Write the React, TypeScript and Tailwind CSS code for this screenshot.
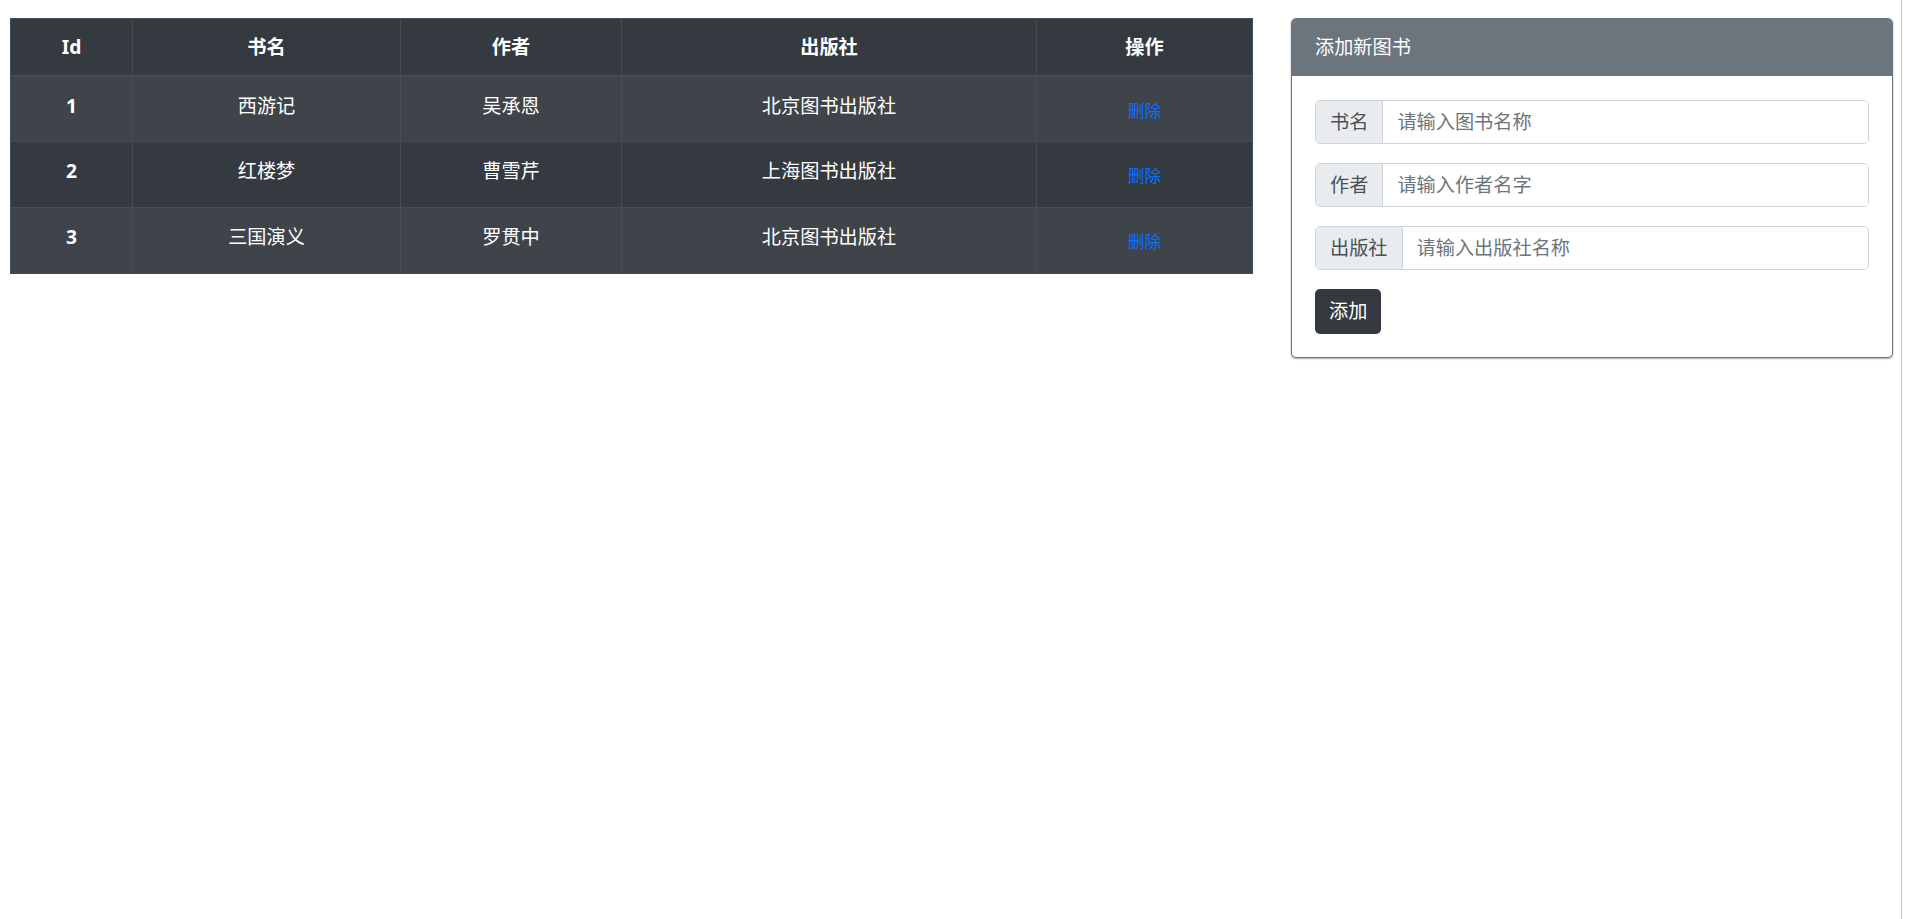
import React, { useState } from 'react';

interface Book {
    id: number;
    name: string;
    author: string;
    publisher: string;
}

const initialBooks: Book[] = [
    { id: 1, name: '西游记', author: '吴承恩', publisher: '北京图书出版社' },
    { id: 2, name: '红楼梦', author: '曹雪芹', publisher: '上海图书出版社' },
    { id: 3, name: '三国演义', author: '罗贯中', publisher: '北京图书出版社' },
];

const font = "font-['Noto_Sans','Noto_Sans_CJK_SC',sans-serif]";

const App: React.FC = () => {
    const [books, setBooks] = useState<Book[]>(initialBooks);
    const [name, setName] = useState('');
    const [author, setAuthor] = useState('');
    const [publisher, setPublisher] = useState('');

    const handleDelete = (id: number) => {
        setBooks(books.filter(b => b.id !== id));
    };

    const handleAdd = () => {
        if (!name || !author || !publisher) return;
        const nextId = books.length ? Math.max(...books.map(b => b.id)) + 1 : 1;
        setBooks([...books, { id: nextId, name, author, publisher }]);
        setName('');
        setAuthor('');
        setPublisher('');
    };

    // input rows of the form
    const fields = [
        { label: '书名', placeholder: '请输入图书名称', value: name, set: setName },
        { label: '作者', placeholder: '请输入作者名字', value: author, set: setAuthor },
        { label: '出版社', placeholder: '请输入出版社名称', value: publisher, set: setPublisher },
    ];

    return (
        <div className={`min-h-screen w-[1902px] border-r border-[#c4c4c4] bg-white ${font}`}>
            <div className="flex items-start gap-[38px] pl-[10px] pt-[18px]">
                {/* books table */}
                <table className="w-[1242px] table-fixed border-collapse border border-[#454d55] text-center text-[19.2px] text-white">
                    <colgroup>
                        <col className="w-[122px]" />
                        <col className="w-[268px]" />
                        <col className="w-[221px]" />
                        <col className="w-[415px]" />
                        <col className="w-[216px]" />
                    </colgroup>
                    <thead>
                        <tr className="h-[57px] bg-[#343a40]">
                            {['Id', '书名', '作者', '出版社', '操作'].map(h => (
                                <th
                                    key={h}
                                    className="border border-b-2 border-[#454d55] px-[14px] align-middle font-bold leading-[29px]"
                                >
                                    {h}
                                </th>
                            ))}
                        </tr>
                    </thead>
                    <tbody>
                        {books.map((b, i) => (
                            <tr key={b.id} className={i % 2 === 0 ? 'h-[66px] bg-[#3e444a]' : 'h-[66px] bg-[#343a40]'}>
                                <th className="h-[66px] border border-[#454d55] px-[14px] pt-[14px] align-top font-bold leading-[29px]">
                                    {b.id}
                                </th>
                                <td className="border border-[#454d55] px-[14px] pt-[14px] align-top leading-[29px]">{b.name}</td>
                                <td className="border border-[#454d55] px-[14px] pt-[14px] align-top leading-[29px]">{b.author}</td>
                                <td className="border border-[#454d55] px-[14px] pt-[14px] align-top leading-[29px]">{b.publisher}</td>
                                <td className="border border-[#454d55] px-[14px] pt-[15px] pb-[12px] align-top leading-[29px]">
                                    <button
                                        onClick={() => handleDelete(b.id)}
                                        className="inline-block border border-transparent px-[10px] py-[5px] align-top text-[16.8px] leading-[25px] text-[#0d6efd]"
                                    >
                                        删除
                                    </button>
                                </td>
                            </tr>
                        ))}
                    </tbody>
                </table>

                {/* add form card */}
                <div className="w-[602px] overflow-hidden rounded-[5px] border border-[#6c757d] bg-white shadow-[0_1px_2px_rgba(0,0,0,0.35)]">
                    <div className="flex h-[57px] items-center bg-[#6c757d] px-[23px] text-[19.2px] text-white">
                        添加新图书
                    </div>
                    <div className="px-[23px] pb-[23px] pt-[24px]">
                        {fields.map(f => (
                            <div
                                key={f.label}
                                className="mb-[19px] flex h-[44px] overflow-hidden rounded-[5px] border border-[#ced4da] text-[19.2px]"
                            >
                                <span className="flex items-center border-r border-[#ced4da] bg-[#e9ecef] px-[14px] text-[#495057]">
                                    {f.label}
                                </span>
                                <input
                                    value={f.value}
                                    onChange={e => f.set(e.target.value)}
                                    placeholder={f.placeholder}
                                    className="min-w-0 flex-1 bg-white px-[14px] text-[#495057] outline-none placeholder:text-[#6c757d]"
                                />
                            </div>
                        ))}
                        <button
                            onClick={handleAdd}
                            className="h-[45px] rounded-[5px] bg-[#343a40] px-[14px] text-[19.2px] text-white"
                        >
                            添加
                        </button>
                    </div>
                </div>
            </div>
        </div>
    );
};

export default App;
